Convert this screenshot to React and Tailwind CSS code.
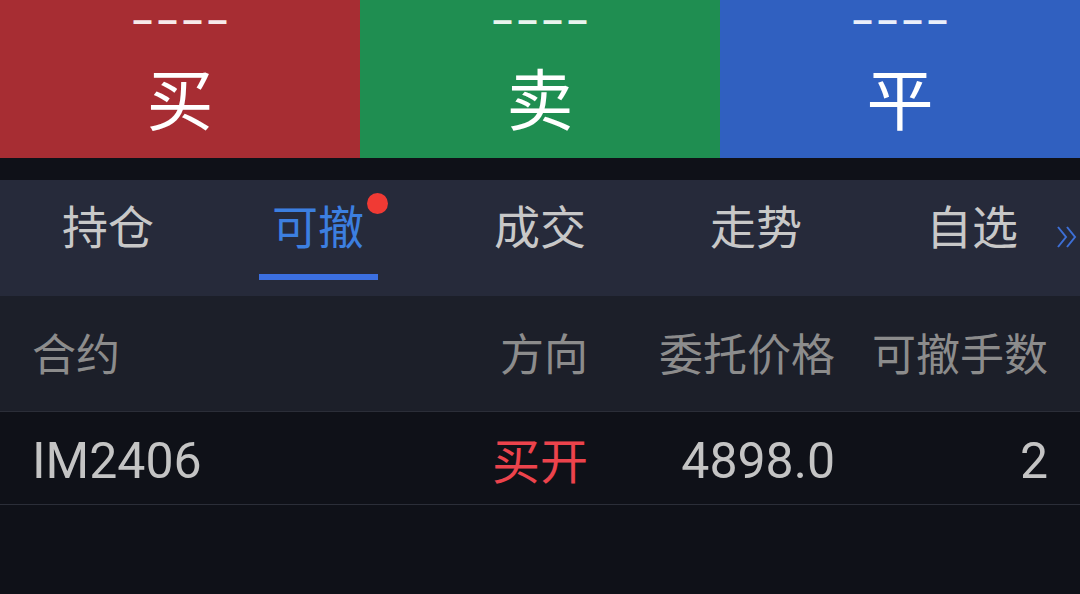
const cjk = { fontFamily: '"Noto Sans", "Noto Sans CJK SC", sans-serif' };
const num = { fontFamily: 'Roboto, "Noto Sans CJK SC", sans-serif' };

const ActionButton = ({ label, bg }) => (
  <div className={`flex flex-1 flex-col items-center ${bg}`}>
    <div
      className="mt-[2px] h-[36px] pl-[5px] text-[36px] leading-[36px] font-bold tracking-[5px] text-white/90"
      style={{ fontFamily: '"Liberation Sans", sans-serif' }}
    >
      ––––
    </div>
    <div className="mt-[21px] text-[67px] leading-[80px] text-white">{label}</div>
  </div>
);

const tabs = ['持仓', '可撤', '成交', '走势', '自选'];

export default function App() {
  return (
    <div className="flex h-[594px] w-[1080px] flex-col overflow-hidden bg-[#0f1118]" style={cjk}>
      {/* Buy / Sell / Close */}
      <div className="flex h-[158px]">
        <ActionButton label="买" bg="bg-[#a72d33]" />
        <ActionButton label="卖" bg="bg-[#1f8e51]" />
        <ActionButton label="平" bg="bg-[#3060c0]" />
      </div>

      {/* Tabs */}
      <div className="relative mt-[22px] flex h-[116px] bg-[#262a3a]">
        {tabs.map((t, i) => (
          <div key={t} className="relative flex flex-1 flex-col items-center">
            <div
              className={`mt-[18px] text-[46px] leading-[56px] ${
                i === 1 ? '-ml-[12px] text-[#3c7fe0]' : 'text-[#c8c8c8]'
              }`}
            >
              {t}
            </div>
            {i === 1 && (
              <>
                <div className="-ml-[12px] mt-[20px] h-[6px] w-[119px] bg-[#3b6fe0]" />
                <span className="absolute left-[151px] top-[13px] h-[21px] w-[21px] rounded-full bg-[#f03a34]" />
              </>
            )}
          </div>
        ))}
        <svg
          className="absolute right-[3px] top-[45px]"
          width="21"
          height="24"
          viewBox="0 0 21 24"
          fill="none"
          stroke="#3d6fd6"
          strokeWidth="2"
        >
          <path d="M2 2 L10 12 L2 22" />
          <path d="M11 2 L19 12 L11 22" />
        </svg>
      </div>

      {/* Header */}
      <div className="flex h-[116px] items-center border-b border-[#2b2e38] bg-[#1c1f29] pr-[32px] pl-[32px] text-[44px] text-[#8c8c8c]">
        <div className="flex-1">合约</div>
        <div className="w-[200px] text-right">方向</div>
        <div className="w-[247px] text-right">委托价格</div>
        <div className="w-[213px] text-right">可撤手数</div>
      </div>

      {/* Row */}
      <div className="flex h-[93px] items-center border-b border-[#2b2e38] bg-[#0f1118] pt-[6px] pr-[32px] pl-[32px] text-[50px] text-[#c4c4c4]">
        <div className="flex-1" style={num}>IM2406</div>
        <div className="w-[200px] text-right text-[48px] text-[#ec434c]">买开</div>
        <div className="w-[247px] text-right" style={num}>4898.0</div>
        <div className="w-[213px] text-right" style={num}>2</div>
      </div>
    </div>
  );
}
